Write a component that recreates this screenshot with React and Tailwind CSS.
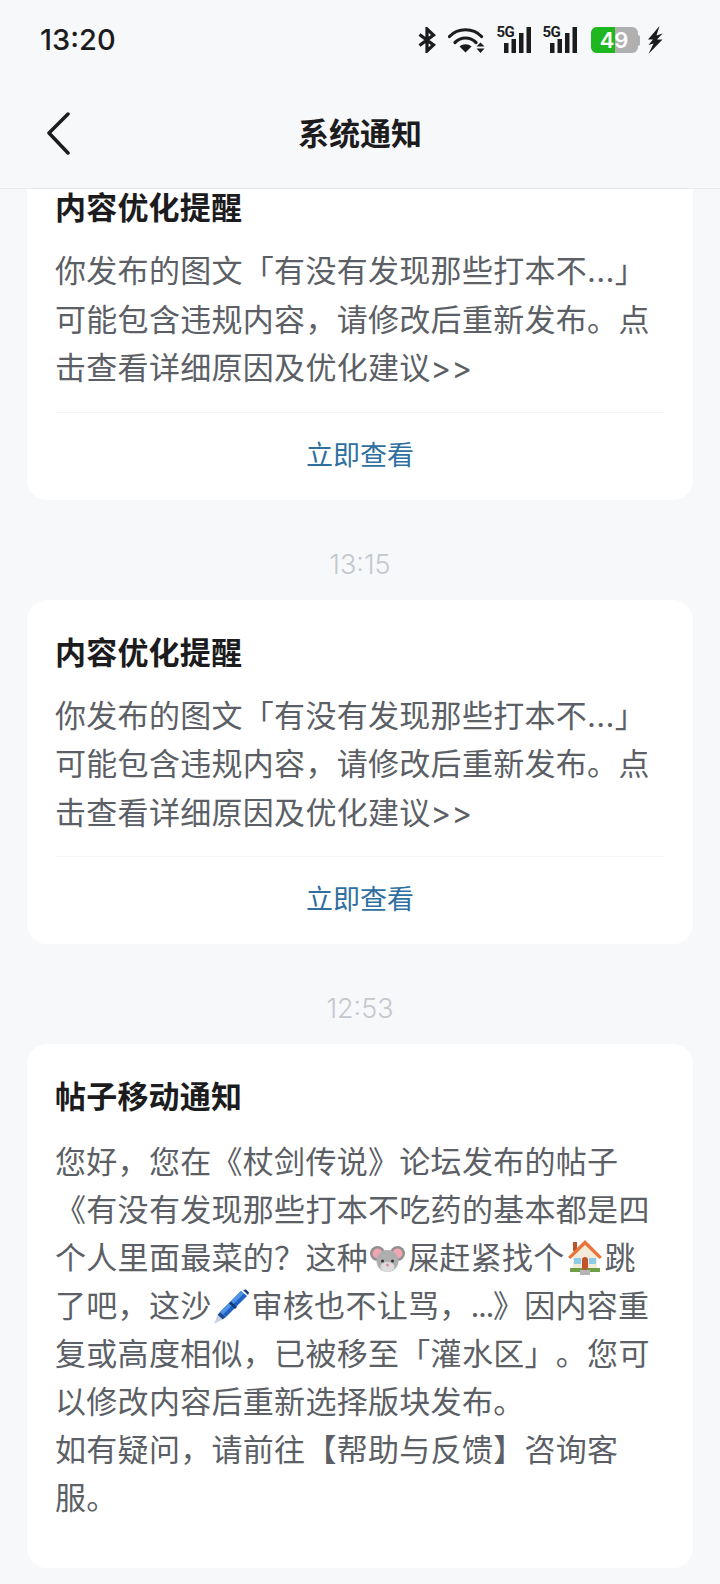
const FONT = "font-['Inter','Noto_Sans_CJK_SC',sans-serif]"

const BluetoothIcon = () => (
  <svg className="-ml-[1px]" width="18" height="26" viewBox="0 0 18 26" fill="none" stroke="#1c1c1e" strokeWidth="3.2">
    <path d="M1.500 7.500l14 10.500-6.500 6V2l6.500 6-14 10.500" />
  </svg>
)

const WifiIcon = () => (
  <svg width="37" height="26" viewBox="0 0 37 26" fill="none">
    <path d="M1.500 9.500C10 .5 25 .5 33.500 9.500" stroke="#1c1c1e" strokeWidth="3.200" strokeLinecap="round" />
    <path d="M7 15.500c6-6 15-6 21 0" stroke="#1c1c1e" strokeWidth="3.200" strokeLinecap="round" />
    <path d="M11.500 19.500c3.500-3 8.500-3 12 0L17.500 25.500z" fill="#1c1c1e" />
    <path d="M32.500 15.500l4 4h-8zM32.500 26l4-4.500h-8z" fill="#1c1c1e" />
  </svg>
)

const SignalIcon = () => (
  <div className="relative w-[34px] h-[28px]">
    <span className="absolute left-0 -top-[1px] text-[15px] leading-[15px] tracking-[-0.5px] font-bold text-[#1c1c1e] font-['Roboto',sans-serif]">5G</span>
    <svg className="absolute inset-0" width="34" height="28" viewBox="0 0 34 28" fill="#1c1c1e">
      <rect x="7" y="17" width="4.500" height="10" />
      <rect x="14.500" y="13" width="4.500" height="14" />
      <rect x="22" y="7" width="4.500" height="20" />
      <rect x="29.500" y="1" width="4.500" height="26" />
    </svg>
  </div>
)

const Battery = () => (
  <div className="flex items-center ml-[2px]">
    <div className="relative w-[47px] h-[26px] rounded-[6px] overflow-hidden bg-[#b0b0b0] flex">
      <div className="w-[24px] h-full bg-[#1fb71f]" />
      <span className="absolute inset-0 flex items-center justify-center text-white text-[22px] font-semibold leading-none">49</span>
    </div>
    <div className="w-[2.500px] h-[11px] bg-[#b0b0b0] rounded-r-sm" />
  </div>
)

const ChargeIcon = () => (
  <svg className="-ml-[5px]" width="16" height="28" viewBox="0 0 16 28" fill="#1c1c1e">
    <path d="M12.500 0L1 13.500h5L1.500 19l5-1.500L1.500 28 15.500 13.500h-5.500L15.500 7.500 9.500 9.500z" />
  </svg>
)

const BackIcon = () => (
  <svg width="24" height="44" viewBox="0 0 24 44" fill="none" stroke="#1c1c1e" strokeWidth="3.500" strokeLinecap="round" strokeLinejoin="round">
    <path d="M21 2L2 21l19 20" />
  </svg>
)

// emoji drawn by hand, the sandbox has no colour emoji font
const MouseEmoji = () => (
  <svg className="inline-block align-[-3px] ml-[2px] mr-[3px]" width="35" height="26" viewBox="0 0 35 26">
    <circle cx="7.500" cy="7.500" r="7.500" fill="#8f8f8f" />
    <circle cx="27.500" cy="7.500" r="7.500" fill="#8f8f8f" />
    <circle cx="7.500" cy="7.500" r="5" fill="#f0a6b0" />
    <circle cx="27.500" cy="7.500" r="5" fill="#f0a6b0" />
    <ellipse cx="17.500" cy="15" rx="11" ry="11" fill="#aeaeae" />
    <ellipse cx="17.500" cy="21" rx="7" ry="5" fill="#dcdcdc" />
    <circle cx="12.500" cy="15" r="1.500" fill="#333" />
    <circle cx="22.500" cy="15" r="1.500" fill="#333" />
    <circle cx="17.500" cy="19" r="1.500" fill="#e58a98" />
  </svg>
)

const HouseEmoji = () => (
  <svg className="inline-block align-[-6px] mx-[2px]" width="36" height="36" viewBox="0 0 36 36">
    <rect x="6" y="3" width="4" height="9" fill="#b8552c" />
    <path d="M6 15h24v15H6z" fill="#f3ead8" />
    <rect x="3" y="29" width="30" height="4" fill="#6f9e48" />
    <rect x="13" y="31" width="10" height="5" fill="#b5b5b5" />
    <path d="M18 6L6 17v3h24v-3z" fill="#f3ead8" />
    <path d="M18 1L1 18l2.500 2L18 6l14.500 14 2.500-2z" fill="#e8743b" />
    <rect x="7" y="19" width="7" height="6" fill="#8ecbe8" />
    <rect x="22" y="19" width="7" height="6" fill="#8ecbe8" />
    <rect x="15" y="18" width="6" height="13" rx="3" fill="#c0522e" />
  </svg>
)

const PenEmoji = () => (
  <svg className="inline-block align-[-8px] ml-[1px] mr-[3px]" width="36" height="36" viewBox="0 0 36 36">
    <path d="M28 2l6 5L13 28l-6-5z" fill="#1f62c4" />
    <path d="M28 2l3 2.500L10 25.500 7 23z" fill="#4f94e6" />
    <path d="M18 12.500l6 5.500-2 2-6-5.500z" fill="#123b7a" />
    <path d="M7 23l6 5-3.500 2.500-5-4.500z" fill="#1c4a93" />
    <path d="M4.500 26l5 4.500L1 35z" fill="#c9d4e0" />
    <path d="M30 1l5 5 1-2.500-3-3z" fill="#123b7a" />
  </svg>
)

const Notice = ({ title, lines, action }) => (
  <div className={`bg-white rounded-[20px] px-[28px] pt-[30px] ${action ? "" : "pb-[46px]"}`}>
    <div className="text-[31px] tracking-[0.2px] leading-[46px] font-bold text-[#1c1c1e]">{title}</div>
    <div className={`text-[31px] tracking-[0.3px] text-[#5c5f66] whitespace-nowrap [text-spacing-trim:space-all] ${action ? "mt-[16px] leading-[48.500px]" : "mt-[18px] leading-[48px]"}`}>
      {lines.map((line, i) => (
        <div key={i}>{line}</div>
      ))}
    </div>
    {action && (
      <>
        <div className="mt-[19px] border-t border-[#f3f4f5]" />
        <div className="h-[87px] flex items-center justify-center text-[27px] text-[#2f6f9f]">{action}</div>
      </>
    )}
  </div>
)

const TimeLabel = ({ children }) => (
  <div className="h-[100px] pt-[31px] flex items-center justify-center text-[27px] font-light text-[#c4c7cc]">{children}</div>
)

const optimizeLines = [
  "你发布的图文「有没有发现那些打本不...」",
  "可能包含违规内容，请修改后重新发布。点",
  "击查看详细原因及优化建议>>",
]

const App = () => {
  return (
    <div className={`w-[720px] h-[1584px] overflow-hidden bg-[#f6f8fa] flex flex-col ${FONT}`}>
      {/* STATUS BAR + TITLE */}
      <div className="h-[189px] shrink-0 bg-[#f7f8fa] border-b border-[#e9eaec] relative z-10">
        <div className="h-[80px] pl-[40px] pr-[57px] flex items-center justify-between">
          <span className="text-[29px] font-medium text-[#1c1c1e]">13:20</span>
          <div className="flex items-center gap-[12px]">
            <BluetoothIcon />
            <WifiIcon />
            <SignalIcon />
            <SignalIcon />
            <Battery />
            <ChargeIcon />
          </div>
        </div>
        <div className="relative h-[108px] flex items-center justify-center">
          <div className="absolute left-[47px] top-[32px]"><BackIcon /></div>
          <span className="text-[31px] font-bold text-[#1c1c1e]">系统通知</span>
        </div>
      </div>

      {/* SCROLLED LIST */}
      <div className="flex-1 overflow-hidden">
        <div className="-mt-[34px] mx-[27px]">
          <Notice title="内容优化提醒" lines={optimizeLines} action="立即查看" />
          <TimeLabel>13:15</TimeLabel>
          <Notice title="内容优化提醒" lines={optimizeLines} action="立即查看" />
          <TimeLabel>12:53</TimeLabel>
          <Notice
            title="帖子移动通知"
            lines={[
              "您好，您在《杖剑传说》论坛发布的帖子",
              "《有没有发现那些打本不吃药的基本都是四",
              <>个人里面最菜的？这种<MouseEmoji />屎赶紧找个<HouseEmoji />跳</>,
              <>了吧，这沙<PenEmoji />审核也不让骂，<span className="tracking-[-1.5px]">...</span>》因内容重</>,
              "复或高度相似，已被移至「灌水区」。您可",
              "以修改内容后重新选择版块发布。",
              "如有疑问，请前往【帮助与反馈】咨询客",
              "服。",
            ]}
          />
        </div>
      </div>
    </div>
  )
}

export default App
